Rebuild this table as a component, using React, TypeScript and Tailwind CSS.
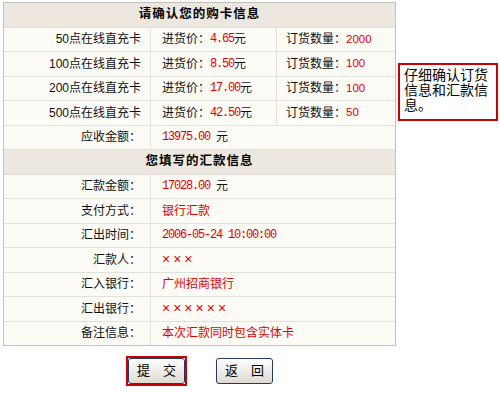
import React from "react";

const sans = { fontFamily: '"Liberation Sans", "Noto Sans CJK SC", sans-serif' };

type CardRow = { name: string; price: string; qty: string };

const cards: CardRow[] = [
  { name: "50点在线直充卡", price: "4.65", qty: "2000" },
  { name: "100点在线直充卡", price: "8.50", qty: "100" },
  { name: "200点在线直充卡", price: "17.00", qty: "100" },
  { name: "500点在线直充卡", price: "42.50", qty: "50" },
];

function Mono({ children }: { children: React.ReactNode }) {
  return (
    <span className="font-['Liberation_Mono',monospace] text-[12px] tracking-[-1.2px] text-[#e00000]">
      {children}
    </span>
  );
}

function Head({ title }: { title: string }) {
  return (
    <div className="col-span-3 flex items-center justify-center bg-[#ece8df] text-[12.5px] font-bold tracking-[1px] text-black">
      {title}
    </div>
  );
}

function Label({ text }: { text: string }) {
  return <div className="flex items-center justify-end bg-[#fcfbf6] pr-[9px] text-[#111]">{text}</div>;
}

function Value({ children }: { children: React.ReactNode }) {
  return (
    <div className="col-span-2 flex items-center bg-[#fcfbf6] pl-[11px] text-[#e00000]">{children}</div>
  );
}

export default function App() {
  return (
    <div className="h-[393px] w-[500px] bg-white pl-[3px] pt-[2px] text-[12px]" style={sans}>
      <div className="flex items-start gap-[2px]">
        <div className="w-[393px]">
          {/* order table */}
          <div className="grid grid-cols-[146px_125px_118px] auto-rows-[23.5px] gap-px border border-[#c4c1ba] bg-[#e3e0d9]">
            <Head title="请确认您的购卡信息" />
            {cards.map((c) => (
              <React.Fragment key={c.name}>
                <Label text={c.name} />
                <div className="flex items-center bg-[#fcfbf6] pl-[11px] text-[#111]">
                  进货价：<Mono>{c.price}</Mono>元
                </div>
                <div className="flex items-center bg-[#fcfbf6] pl-[9px] text-[#111]">
                  订货数量：<span className="text-[11.5px] text-[#e00000]">{c.qty}</span>
                </div>
              </React.Fragment>
            ))}
            <Label text="应收金额：" />
            <Value>
              <Mono>13975.00</Mono>
              <span className="ml-[6px] text-[#111]">元</span>
            </Value>

            <Head title="您填写的汇款信息" />
            <Label text="汇款金额：" />
            <Value>
              <Mono>17028.00</Mono>
              <span className="ml-[6px] text-[#111]">元</span>
            </Value>
            <Label text="支付方式：" />
            <Value>银行汇款</Value>
            <Label text="汇出时间：" />
            <Value>
              <Mono>2006-05-24 10:00:00</Mono>
            </Value>
            <Label text="汇款人：" />
            <Value>
              <span className="text-[14px] tracking-[3px]">×××</span>
            </Value>
            <Label text="汇入银行：" />
            <Value>广州招商银行</Value>
            <Label text="汇出银行：" />
            <Value>
              <span className="text-[14px] tracking-[3px]">××××××</span>
            </Value>
            <Label text="备注信息：" />
            <Value>本次汇款同时包含实体卡</Value>
          </div>

          {/* buttons */}
          <div className="mt-[10px] flex items-center justify-center gap-[29px]">
            <div className="border-2 border-[#cc0000]">
              <button
                type="button"
                className="flex h-[26px] w-[57px] items-center justify-center rounded-[3px] border border-[#22386a] bg-gradient-to-b from-white to-[#dedbd2] text-[13px] text-black"
              >
                提　交
              </button>
            </div>
            <button
              type="button"
              className="flex h-[26px] w-[57px] items-center justify-center rounded-[3px] border border-[#22386a] bg-gradient-to-b from-white to-[#dedbd2] text-[13px] text-black"
            >
              返　回
            </button>
          </div>
        </div>

        {/* tip box */}
        <div className="mt-[61px] w-[100px] border-2 border-[#cc0000] px-[4px] pb-[6px] pt-[3px] text-[14px] leading-[15px] text-black">
          仔细确认订货
          <br />
          信息和汇款信
          <br />
          息。
        </div>
      </div>
    </div>
  );
}
